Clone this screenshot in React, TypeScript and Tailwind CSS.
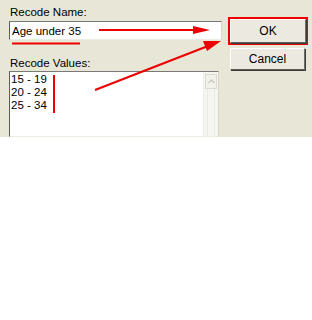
import React from "react";

const ranges = ["15 - 19", "20 - 24", "25 - 34"];

function XpButton({ label, className = "" }: { label: string; className?: string }) {
  return (
    <div
      className={`flex items-center justify-center bg-[#ECEAE0] border border-t-white border-l-white border-r-[#6f6f6a] border-b-[#5a5a56] shadow-[1px_1px_0_#3c3c3a] text-[12px] text-black ${className}`}
    >
      {label}
    </div>
  );
}

export default function App() {
  return (
    <div className="w-[312px] h-[320px] bg-white font-['Liberation_Sans',Arial,sans-serif] text-black">
      <div className="relative h-[137px] overflow-hidden bg-[#E8E6D6] flex pl-[9px] pt-[5px]">
        {/* left column */}
        <div className="w-[213px] flex flex-col">
          <div className="text-[11.5px] leading-[14px] pl-[1px]">Recode Name:</div>
          <div className="mt-[2px] h-[19px] bg-white border border-t-[#7a7a74] border-l-[#5c5c58] border-r-[#d8d6cc] border-b-[#ecebe4] flex items-center pl-[2px] text-[11.5px] leading-[14px] pt-[1px]">
            Age under 35
          </div>
          <div className="mt-[16px] text-[11.5px] leading-[14px] pl-[1px]">Recode Values:</div>
          <div className="mt-[1px] flex-1 w-[210px] bg-white border border-t-[#7a7a74] border-l-[#5c5c58] border-r-[#d8d6cc] border-b-[#ecebe4] flex">
            <div className="flex-1 pl-[1px] pt-[1px] text-[11.5px] leading-[13px]">
              {ranges.map((r) => (
                <div key={r}>{r}</div>
              ))}
            </div>
            {/* faded scrollbar */}
            <div className="w-[15px] bg-[#F6F6F1] border-l border-[#eeeee8] flex flex-col">
              <div className="h-[15px] mt-[2px] mx-[1px] bg-[#F2F1EA] border border-[#dcdbd2] flex items-center justify-center">
                <svg width="7" height="5" viewBox="0 0 7 5">
                  <path d="M0.5 4 L3.5 1 L6.5 4" fill="none" stroke="#c9c8bf" strokeWidth="1.4" />
                </svg>
              </div>
              <div className="flex-1 mx-[3px] border-x border-[#ebebe4]" />
            </div>
          </div>
        </div>

        {/* buttons */}
        <div className="ml-[6px] pt-[12px] flex flex-col">
          <div className="border-2 border-[#ee0000]">
            <XpButton label="OK" className="w-[76px] h-[24px]" />
          </div>
          <XpButton label="Cancel" className="mt-[3px] ml-[2px] w-[75px] h-[22px]" />
        </div>

        {/* red annotations */}
        <svg className="absolute inset-0 pointer-events-none" width="312" height="137">
          <rect x="12" y="42.5" width="68" height="2" fill="#ee0000" />
          <rect x="53" y="75" width="2" height="38" fill="#ee0000" />
          <line x1="99" y1="30" x2="196" y2="30" stroke="#ee0000" strokeWidth="2" />
          <polygon points="193,26 210,30 193,34" fill="#ee0000" />
          <line x1="95" y1="90" x2="208" y2="46" stroke="#ee0000" strokeWidth="2" />
          <polygon points="203,41 221,41 207,51" fill="#ee0000" />
        </svg>
      </div>
    </div>
  );
}
